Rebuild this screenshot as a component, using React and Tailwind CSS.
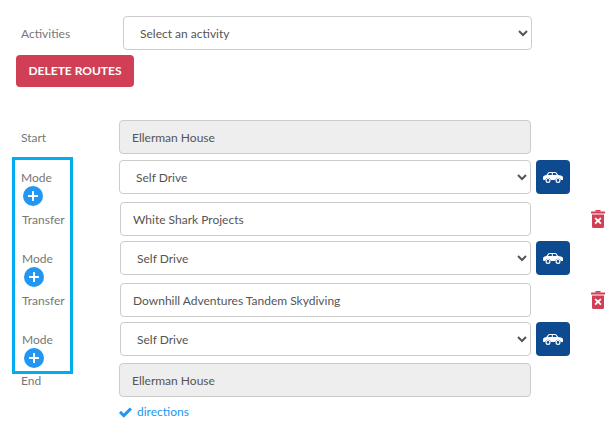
const CarIcon = () => (
  <svg width="20" height="11" viewBox="0 0 20 11" fill="white">
    <path fillRule="evenodd" d="M5 0.8 Q5.6 0 6.6 0 H12 Q13 0 13.6 0.8 L15.2 3 L18 3.6 Q20 4 20 5.6 V7.4 Q20 8 19.2 8 H17.8 A2.9 2.9 0 0 0 12.2 8 H7.8 A2.9 2.9 0 0 0 2.2 8 H0.8 Q0 8 0 7.2 V5.4 Q0 4 1.6 3.6 L3.4 3 Z M6.2 1 L4.9 3 H8.8 V1 Z M9.8 1 V3 H13.8 L12.4 1 Z" />
    <circle cx="5" cy="8.4" r="1.9" fill="none" stroke="white" strokeWidth="1.2" />
    <circle cx="15" cy="8.4" r="1.9" fill="none" stroke="white" strokeWidth="1.2" />
  </svg>
);

const TrashIcon = () => (
  <svg width="14" height="18" viewBox="0 0 14 18" fill="#d03f55">
    <rect x="4.5" y="0" width="5" height="1.6" />
    <rect x="0" y="1.4" width="14" height="2" rx="0.5" />
    <path fillRule="evenodd" d="M1 4.4 H13 V16.4 Q13 18 11.4 18 H2.6 Q1 18 1 16.4 Z M4.7 7.4 L3.5 8.6 L5.6 10.8 L3.5 13 L4.7 14.2 L7 12 L9.3 14.2 L10.5 13 L8.4 10.8 L10.5 8.6 L9.3 7.4 L7 9.6 Z" />
  </svg>
);

const PlusButton = () => (
  <button className="flex h-5 w-5 items-center justify-center rounded-full bg-[#2196f3]">
    <svg width="10" height="10" viewBox="0 0 10 10" fill="white">
      <rect x="4" y="0" width="2" height="10" rx="0.5" />
      <rect x="0" y="4" width="10" height="2" rx="0.5" />
    </svg>
  </button>
);

const ModeRow = ({ className, inset }) => (
  <div className={`flex h-[34px] ${className}`}>
    <div className={`relative h-full shrink-0 pt-[10px] ${inset ? 'w-[120px] pl-[22px]' : 'w-[119px] pl-[21px]'}`}>
      <div className="leading-4">Mode</div>
      <div className="ml-[2px]">
        <PlusButton />
      </div>
    </div>
    <select className={`h-full rounded border border-[#ccc] bg-white pl-[12px] text-xs text-[#555] ${inset ? 'w-[411px]' : 'w-[412px]'}`}>
      <option>Self Drive</option>
    </select>
    <button className="ml-[5px] flex h-[34px] w-[34px] items-center justify-center rounded bg-[#0d4a8f]">
      <CarIcon />
    </button>
  </div>
);

const TransferRow = ({ value, className }) => (
  <div className={`flex h-[34px] items-center ${className}`}>
    <div className="w-[120px] shrink-0 pt-[2px] pl-[22px]">Transfer</div>
    <input
      readOnly
      value={value}
      className="h-full w-[411px] rounded border border-[#ccc] bg-white px-[12px] text-xs text-[#555]"
    />
    <div className="ml-[60px]">
      <TrashIcon />
    </div>
  </div>
);

const FixedRow = ({ label, className }) => (
  <div className={`flex h-[34px] items-center ${className}`}>
    <div className="w-[119px] shrink-0 pt-[2px] pl-[21px]">{label}</div>
    <input
      readOnly
      value="Ellerman House"
      className="h-full w-[412px] rounded border border-[#ccc] bg-[#eee] px-[12px] text-xs text-[#555]"
    />
  </div>
);

export default function App() {
  return (
    <div className="relative h-[426px] w-[616px] overflow-hidden bg-white pt-4 font-['Lato',sans-serif] text-xs text-[#777]">
      <div className="flex h-[34px] items-center">
        <div className="w-[123px] shrink-0 pt-[2px] pl-[21px]">Activities</div>
        <select className="h-full w-[409px] rounded border border-[#ccc] bg-white pl-[12px] text-xs text-[#555]">
          <option>Select an activity</option>
        </select>
      </div>

      <button className="mt-[5px] ml-4 h-8 w-[118px] rounded bg-[#d03f55] text-xs font-bold text-white">
        DELETE ROUTES
      </button>

      <FixedRow label="Start" className="mt-[33px]" />
      <ModeRow className="mt-[6px]" />
      <TransferRow value="White Shark Projects" className="mt-2" />
      <ModeRow inset className="mt-[5px]" />
      <TransferRow value="Downhill Adventures Tandem Skydiving" className="mt-2" />
      <ModeRow inset className="mt-[5px]" />
      <FixedRow label="End" className="mt-[7px]" />

      <div className="mt-[7px] ml-[119px] flex items-center gap-[5px] text-[#2196f3]">
        <svg width="13" height="11" viewBox="0 0 13 11" fill="#2196f3">
          <path d="M0 6 L2 3.8 L4.8 6.4 L10.8 0.4 L13 2.6 L4.8 10.8 Z" />
        </svg>
        <a href="#">directions</a>
      </div>

      {/* annotation box drawn over the labels */}
      <div className="pointer-events-none absolute top-[157px] left-3 h-[217px] w-[61px] border-[3px] border-[#00adef]" />
    </div>
  );
}
